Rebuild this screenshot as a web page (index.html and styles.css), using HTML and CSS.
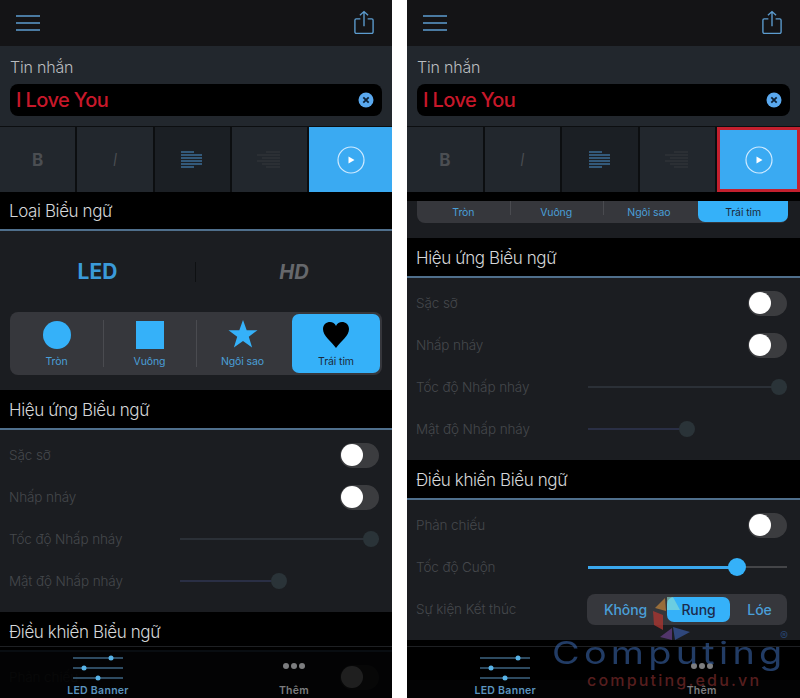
FILE: index.html
```html
<!DOCTYPE html>
<html lang="vi">
<head>
  <meta charset="UTF-8" />
  <meta name="viewport" content="width=device-width, initial-scale=1.0" />
  <title>LED Banner</title>
  <link rel="stylesheet" href="styles.css">
</head>
<body>
  <svg class="hidden">
    <symbol id="i-menu" viewBox="0 0 24 16"><path d="M0 1h24M0 8h24M0 15h24" fill="none" stroke="currentColor" stroke-width="1.4"/></symbol>
    <symbol id="i-share" viewBox="0 0 22 26"><path d="M7 9H2.500A1.500 1.500 0 0 0 1 10.500V23.500A1.500 1.500 0 0 0 2.500 25H19.500A1.500 1.500 0 0 0 21 23.500V10.500A1.500 1.500 0 0 0 19.500 9H15M11 17V1M6.500 5L11 1L15.500 5" fill="none" stroke="currentColor" stroke-width="1.500"/></symbol>
    <symbol id="i-clear" viewBox="0 0 16 16"><circle cx="8" cy="8" r="7.500" fill="#5aa9ef"/><path d="M5.300 5.300l5.400 5.400M10.700 5.300l-5.400 5.400" stroke="#0c2238" stroke-width="1.800"/></symbol>
    <symbol id="i-left" viewBox="0 0 22 18"><path d="M0 1h13M0 4h21M0 7h21M0 10h21M0 13h21M0 16h13" fill="none" stroke="currentColor" stroke-width="1.200"/></symbol>
    <symbol id="i-right" viewBox="0 0 24 18"><path d="M9 1h14M0 4h23M5 7h18M0 10h23M5 13h18M9 16h14" fill="none" stroke="currentColor" stroke-width=".9"/></symbol>
    <symbol id="i-play" viewBox="0 0 28 28"><circle cx="14" cy="14" r="13" fill="none" stroke="#cfeaff" stroke-width="1.200"/><path d="M11.500 10.500l6 3.500l-6 3.500z" fill="#fff"/></symbol>
    <symbol id="i-star" viewBox="0 0 30 30"><path d="M15 1l3.700 10.200H29.500l-8.700 6.500l3.300 10.700L15 21.900L5.900 28.400l3.300-10.700L.5 11.200H11.300z" fill="currentColor"/></symbol>
    <symbol id="i-heart" viewBox="0 0 28 28"><path d="M14 27C9 20 1 15 1 8C1 3.500 4.500 1 8 1C10.500 1 13 2.500 14 5C15 2.500 17.500 1 20 1C23.500 1 27 3.500 27 8C27 15 19 20 14 27z" fill="#000"/></symbol>
    <symbol id="i-tune" viewBox="0 0 50 30"><path d="M0 5h50M0 15h50M0 25h50" stroke="currentColor" stroke-width="1"/><circle cx="38" cy="5" r="2.500" fill="#58b4e8"/><circle cx="11" cy="15" r="2.500" fill="#58b4e8"/><circle cx="25" cy="25" r="2.500" fill="#58b4e8"/></symbol>
    <symbol id="i-more" viewBox="0 0 24 6"><circle cx="4" cy="3" r="3" fill="currentColor"/><circle cx="12" cy="3" r="3" fill="currentColor"/><circle cx="20" cy="3" r="3" fill="currentColor"/></symbol>
  </svg>

  <div class="screens">
    <!-- Left phone -->
    <div class="phone phone-left">
      <div class="topbar">
        <svg class="icon-menu"><use href="#i-menu"/></svg>
        <svg class="icon-share"><use href="#i-share"/></svg>
      </div>
      <div class="message">
        <div class="message-label">Tin nhắn</div>
        <div class="message-input">
          <span>I Love You</span>
          <svg class="icon-clear"><use href="#i-clear"/></svg>
        </div>
      </div>
      <div class="toolbar">
        <div class="tool tool-b">B</div>
        <div class="tool tool-i">I</div>
        <div class="tool tool-on"><svg class="icon-left"><use href="#i-left"/></svg></div>
        <div class="tool"><svg class="icon-right"><use href="#i-right"/></svg></div>
        <div class="tool tool-play"><svg class="icon-play"><use href="#i-play"/></svg></div>
      </div>

      <div class="section-head">Loại Biểu ngữ</div>
      <div class="type-switch">
        <div class="type-led">LED</div>
        <div class="type-hd">HD</div>
      </div>
      <div class="shapes">
        <div class="shape"><span class="shape-circle"></span><span>Tròn</span></div>
        <div class="shape"><span class="shape-square"></span><span>Vuông</span></div>
        <div class="shape"><svg class="shape-star"><use href="#i-star"/></svg><span>Ngôi sao</span></div>
        <div class="shape shape-on"><svg class="shape-heart"><use href="#i-heart"/></svg><span>Trái tim</span></div>
      </div>

      <div class="section-head">Hiệu ứng Biểu ngữ</div>
      <div class="rows">
        <div class="row"><span>Sặc sỡ</span><span class="toggle"></span></div>
        <div class="row"><span>Nhấp nháy</span><span class="toggle"></span></div>
        <div class="row"><span>Tốc độ Nhấp nháy</span><span class="slider"><i class="thumb"></i></span></div>
        <div class="row"><span>Mật độ Nhấp nháy</span><span class="slider slider-mid"><i class="fill"></i><i class="thumb"></i></span></div>
      </div>

      <div class="section-head">Điều khiển Biểu ngữ</div>
      <div class="rows">
        <div class="row"><span>Phản chiếu</span><span class="toggle"></span></div>
      </div>

      <div class="tabbar">
        <div class="tab tab-on"><svg class="icon-tune"><use href="#i-tune"/></svg><span>LED Banner</span></div>
        <div class="tab"><svg class="icon-more"><use href="#i-more"/></svg><span>Thêm</span></div>
      </div>
    </div>

    <!-- Right phone, scrolled down -->
    <div class="phone phone-right">
      <div class="topbar">
        <svg class="icon-menu"><use href="#i-menu"/></svg>
        <svg class="icon-share"><use href="#i-share"/></svg>
      </div>
      <div class="message">
        <div class="message-label">Tin nhắn</div>
        <div class="message-input">
          <span>I Love You</span>
          <svg class="icon-clear"><use href="#i-clear"/></svg>
        </div>
      </div>
      <div class="toolbar">
        <div class="tool tool-b">B</div>
        <div class="tool tool-i">I</div>
        <div class="tool tool-on"><svg class="icon-left"><use href="#i-left"/></svg></div>
        <div class="tool"><svg class="icon-right"><use href="#i-right"/></svg></div>
        <div class="tool tool-play tool-marked"><svg class="icon-play"><use href="#i-play"/></svg></div>
      </div>

      <div class="scroll-gap"></div>
      <div class="shapes shapes-cut">
        <div class="shape"><span>Tròn</span></div>
        <div class="shape"><span>Vuông</span></div>
        <div class="shape"><span>Ngôi sao</span></div>
        <div class="shape shape-on"><span>Trái tim</span></div>
      </div>

      <div class="section-head">Hiệu ứng Biểu ngữ</div>
      <div class="rows">
        <div class="row"><span>Sặc sỡ</span><span class="toggle"></span></div>
        <div class="row"><span>Nhấp nháy</span><span class="toggle"></span></div>
        <div class="row"><span>Tốc độ Nhấp nháy</span><span class="slider"><i class="thumb"></i></span></div>
        <div class="row"><span>Mật độ Nhấp nháy</span><span class="slider slider-mid"><i class="fill"></i><i class="thumb"></i></span></div>
      </div>

      <div class="section-head">Điều khiển Biểu ngữ</div>
      <div class="rows">
        <div class="row"><span>Phản chiếu</span><span class="toggle"></span></div>
        <div class="row"><span>Tốc độ Cuộn</span><span class="slider slider-live"><i class="fill"></i><i class="thumb"></i></span></div>
        <div class="row">
          <span>Sự kiện Kết thúc</span>
          <div class="events">
            <span class="event event-none">Không</span>
            <span class="event event-on">Rung</span>
            <span class="event event-flash">Lóe</span>
          </div>
        </div>
      </div>
      <div class="section-head section-under"></div>

      <div class="tabbar">
        <div class="tab tab-on"><svg class="icon-tune"><use href="#i-tune"/></svg><span>LED Banner</span></div>
        <div class="tab"><svg class="icon-more"><use href="#i-more"/></svg><span>Thêm</span></div>
      </div>
    </div>
  </div>

  <!-- Watermark stamped over the right phone -->
  <div class="watermark">
    <svg class="wm-logo" viewBox="0 0 40 43">
      <path d="M3 11L13 1L14 14z" fill="#b9803a" opacity=".75"/>
      <path d="M15 0H21L28 13H15z" fill="#8fe0d0" opacity=".6"/>
      <path d="M1 14L11 18V33L2 28z" fill="#a8342f" opacity=".8"/>
      <path d="M8 40L20 31V43z" fill="#5a3a78" opacity=".85"/>
      <path d="M21 30L38 35L23 43z" fill="#324f8c" opacity=".85"/>
    </svg>
    <div class="wm-name">Computing</div>
    <div class="wm-url">computing.edu.vn</div>
    <div class="wm-reg">®</div>
  </div>
</body>
</html>
```

FILE: styles.css
```css
*, *::before, *::after {
  box-sizing: border-box;
}
body {
  margin: 0;
  background-color: #fff;
  font-family: 'Inter', 'Liberation Sans', sans-serif;
  position: relative;
  height: 698px;
  overflow: hidden;
}
.hidden {
  display: none;
}
.screens {
  display: flex;
  justify-content: space-between;
}
.phone {
  position: relative;
  width: 392px;
  height: 698px;
  overflow: hidden;
  background-color: #1b1d21;
  display: flex;
  flex-direction: column;
}
.phone-right {
  width: 393px;
}

/* top bar */
.topbar {
  flex: none;
  height: 46px;
  background-color: #141416;
  color: #5c9ccf;
  display: flex;
  justify-content: space-between;
  padding: 15px 18px 0 16px;
}
.icon-menu {
  width: 24px;
  height: 16px;
}
.icon-share {
  width: 20px;
  height: 25px;
  margin-top: -5px;
}

/* message */
.message {
  flex: none;
  height: 80px;
  background-color: #22272d;
  padding: 10px 10px 0;
}
.message-label {
  color: #b9bcbf;
  font-size: 16px;
  font-weight: 300;
  letter-spacing: -.2px;
  line-height: 22px;
  margin-bottom: 6px;
}
.message-input {
  height: 32px;
  background-color: #000;
  border-radius: 8px;
  padding: 0 8px 0 6px;
  display: flex;
  align-items: center;
  justify-content: space-between;
  color: #c8182a;
  font-size: 20px;
  font-weight: 500;
  letter-spacing: -.6px;
}
.icon-clear {
  width: 16px;
  height: 16px;
}

/* toolbar */
.toolbar {
  flex: none;
  height: 66px;
  background-color: #0c0e10;
  padding-top: 1px;
  display: grid;
  grid-template-columns: repeat(4, 1fr) 83px;
  gap: 2px;
}
.tool {
  background-color: #22272d;
  display: flex;
  align-items: center;
  justify-content: center;
  color: #383b40;
}
.tool-b {
  font-size: 17px;
  font-weight: 700;
  color: #4b4e52;
}
.tool-i {
  font-size: 17px;
  font-style: italic;
  font-weight: 300;
  color: #4b4e52;
}
.tool-on {
  background-color: #1b1f24;
  color: #4d93cf;
}
.tool-play {
  background-color: #3aaaf2;
}
.tool-marked {
  border: 3px solid #c4202e;
}
.icon-left {
  width: 22px;
  height: 18px;
}
.icon-right {
  width: 24px;
  height: 18px;
}
.icon-play {
  width: 28px;
  height: 28px;
}

/* section headers */
.section-head {
  flex: none;
  height: 40px;
  background-color: #000;
  border-bottom: 2px solid #4f6f8c;
  color: #d5d7d9;
  font-size: 17px;
  font-weight: 300;
  letter-spacing: -.4px;
  line-height: 40px;
  padding-left: 9px;
}
.toolbar + .section-head {
  height: 39px;
  line-height: 38px;
}
.section-under {
  border-bottom: none;
}

/* LED / HD */
.type-switch {
  flex: none;
  height: 81px;
  padding-top: 1px;
  display: grid;
  grid-template-columns: 1fr 1fr;
  align-items: center;
  text-align: center;
  font-size: 20px;
  font-weight: 700;
}
.type-led {
  color: #3a9ad9;
  border-right: 1px solid #0e1012;
  font-size: 21px;
  line-height: 20px;
}
.type-hd {
  color: #66686c;
  font-style: italic;
}

/* shape picker: four 93px columns */
.shapes {
  flex: none;
  height: 63px;
  margin: 0 10px 15px;
  background-color: #36373c;
  border-radius: 8px;
  display: grid;
  grid-template-columns: repeat(4, 1fr);
  color: #4a9fd8;
  font-size: 10.500px;
  letter-spacing: -.1px;
}
.shape {
  display: flex;
  flex-direction: column;
  align-items: center;
  justify-content: flex-end;
  gap: 6px;
  padding-bottom: 7px;
  position: relative;
}
.shape:nth-child(2)::before,
.shape:nth-child(3)::before {
  content: "";
  position: absolute;
  left: 0;
  top: 8px;
  bottom: 8px;
  width: 1px;
  background-color: #4a4b50;
}
.shape-on {
  background-color: #35b1f9;
  border-radius: 7px;
  color: #1c2a3a;
  margin: 2px 2px 2px 3px;
  padding-bottom: 5px;
}
.shape-circle {
  width: 28px;
  height: 28px;
  border-radius: 50%;
  background-color: #35b1f9;
}
.shape-square {
  width: 28px;
  height: 28px;
  background-color: #35b1f9;
}
.shape-star {
  width: 30px;
  height: 30px;
  color: #35b1f9;
  margin-top: -2px;
}
.shape-heart {
  width: 28px;
  height: 28px;
}
.shapes-cut {
  width: 371px;
  height: 22px;
  margin-right: 12px;
  border-radius: 0 0 8px 8px;
}
.shapes-cut .shape {
  padding-bottom: 4px;
}
.shapes-cut .shape-on {
  margin: 0 0 1px 3px;
  padding-bottom: 3px;
  border-radius: 0 0 7px 7px;
}
.shapes-cut .shape::before {
  top: 0;
}
.scroll-gap {
  flex: none;
  height: 9px;
  background-color: #000;
}

/* settings rows */
.rows {
  flex: none;
  padding: 4px 13px 10px 9px;
}
.row {
  height: 42px;
  display: flex;
  align-items: center;
  justify-content: space-between;
  color: #45484c;
  font-size: 13.500px;
  font-weight: 300;
  letter-spacing: -.1px;
}
.toggle {
  position: relative;
  width: 39px;
  height: 25px;
  border-radius: 13px;
  background-color: #3b3c3f;
}
.toggle::before {
  content: "";
  position: absolute;
  left: 1px;
  top: 1.500px;
  width: 22px;
  height: 22px;
  border-radius: 50%;
  background-color: #fff;
}
.slider {
  position: relative;
  width: 199px;
  height: 2px;
  background-color: #2b3037;
}
.thumb {
  position: absolute;
  right: 0;
  top: -7px;
  width: 16px;
  height: 16px;
  border-radius: 50%;
  background-color: #2a3338;
}
.slider-mid {
  background-color: transparent;
  display: flex;
}
.slider-mid .fill {
  display: block;
  width: 100px;
  height: 2px;
  background-color: #2a2f45;
}
.slider-mid .thumb {
  right: auto;
  left: 91px;
}
.slider-live {
  background-color: #444548;
}
.slider-live .fill {
  display: block;
  width: 148px;
  height: 3px;
  margin-top: -.5px;
  background-color: #3aa8ee;
}
.slider-live .thumb {
  right: auto;
  left: 140px;
  top: -8px;
  width: 18px;
  height: 18px;
  background-color: #35b1f9;
}

/* end event picker */
.events {
  width: 200px;
  height: 31px;
  background-color: #36373c;
  border-radius: 8px;
  padding: 3px;
  display: grid;
  grid-template-columns: 77px 63px 1fr;
  text-align: center;
  color: #4a9fd8;
  font-size: 14px;
  font-weight: 500;
  letter-spacing: -.1px;
  line-height: 25px;
}
.event-none {
  padding-right: 6px;
}
.event-flash {
  padding-left: 5px;
}
.event-on {
  background-color: #35b1f9;
  border-radius: 7px;
  color: #1c2a4c;
}

/* tab bar sits over the scrolled content */
.tabbar {
  position: absolute;
  left: 0;
  right: 0;
  bottom: 0;
  height: 52px;
  background-color: rgba(0, 0, 0, .88);
  border-top: 1px solid #1e2023;
  display: grid;
  grid-template-columns: 1fr 1fr;
}
.tab {
  display: flex;
  flex-direction: column;
  align-items: center;
  justify-content: flex-end;
  color: #7c7d7f;
  font-size: 10.500px;
  font-weight: 600;
  letter-spacing: .3px;
  padding-bottom: 1px;
}
.tab-on {
  color: #5b94bf;
}
.icon-tune {
  width: 50px;
  height: 30px;
  margin-bottom: 1px;
}
.icon-more {
  width: 24px;
  height: 6px;
  margin-bottom: 15px;
}

/* watermark */
.watermark {
  position: absolute;
  left: 0;
  top: 0;
  width: 800px;
  height: 698px;
  pointer-events: none;
}
.wm-logo {
  position: absolute;
  left: 652px;
  top: 597px;
  width: 40px;
  height: 43px;
  filter: blur(.5px);
}
.wm-name {
  position: absolute;
  left: 552px;
  top: 631px;
  color: rgba(52, 92, 155, .65);
  font-size: 31px;
  font-weight: 400;
  letter-spacing: 3.500px;
  line-height: 44px;
  transform: scaleX(1.22);
  transform-origin: left center;
}
.wm-url {
  position: absolute;
  left: 587px;
  top: 670px;
  color: rgba(110, 38, 38, .8);
  font-size: 16px;
  font-weight: 500;
  letter-spacing: 2.200px;
  line-height: 20px;
}
.wm-reg {
  position: absolute;
  left: 780px;
  top: 628px;
  color: #27436e;
  font-size: 12px;
  line-height: 16px;
}
```
